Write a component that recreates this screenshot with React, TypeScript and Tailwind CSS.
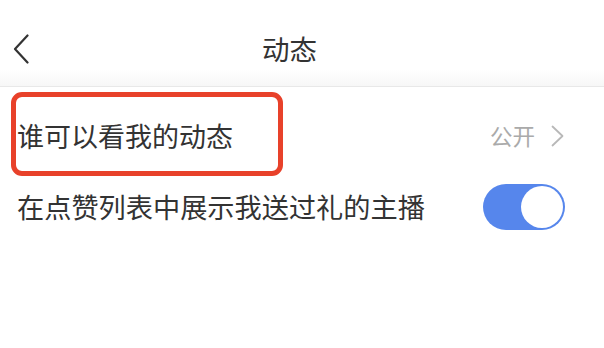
import React from "react";

export default function App() {
  return (
    <div
      className="w-[604px] h-[348px] bg-white overflow-hidden text-[#333]"
      style={{ fontFamily: '"Noto Sans CJK SC", "Noto Sans", sans-serif' }}
    >
      <div className="relative h-[87px] border-b border-[#e8e8e8]">
        <div className="absolute bottom-0 left-0 right-0 h-[16px] bg-gradient-to-b from-white to-[#f7f7f7]" />
        <div className="relative flex h-full items-center pt-[12px] pl-[13px]">
          <svg width="16" height="30" viewBox="0 0 16 30" fill="none">
            <path d="M14.5 1.5 L2 15 L14.5 28.5" stroke="#333" strokeWidth="2.2" strokeLinecap="round" strokeLinejoin="round" />
          </svg>
          <div className="ml-[233px] text-[27.5px] leading-none">动态</div>
        </div>
      </div>

      <div className="relative mt-[13px] flex h-[71px] items-center pl-[17px] pr-[40px]">
        <div className="absolute left-[11px] top-[-8px] h-[84px] w-[272px] rounded-[11px] border-[5px] border-[#e8412a]" />
        <div className="flex-1 text-[27px] leading-none">谁可以看我的动态</div>
        <div className="flex items-center gap-[16px]">
          <span className="text-[22.5px] leading-none text-[#aaaaaa]">公开</span>
          <svg width="13" height="22" viewBox="0 0 13 22" fill="none">
            <path d="M1.5 1.5 L11.5 11 L1.5 20.5" stroke="#b8b8b8" strokeWidth="1.8" strokeLinecap="round" strokeLinejoin="round" />
          </svg>
        </div>
      </div>

      <div className="flex h-[71px] items-center pl-[17px] pr-[39px]">
        <div className="flex-1 text-[27.2px] leading-none">在点赞列表中展示我送过礼的主播</div>
        <div className="flex h-[46px] w-[82px] items-center justify-end rounded-full bg-[#5686ec] pr-[2px]">
          <div className="h-[42px] w-[42px] rounded-full bg-white" />
        </div>
      </div>
    </div>
  );
}
